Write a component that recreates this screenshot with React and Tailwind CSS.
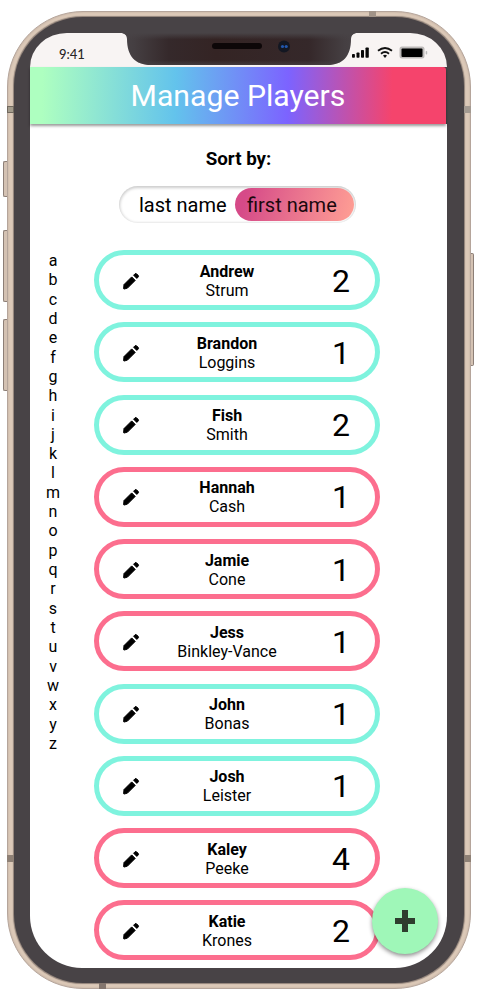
const letters = 'abcdefghijklmnopqrstuvwxyz'.split('');

const players = [
  { first: 'Andrew', last: 'Strum', count: 2, team: 'mint' },
  { first: 'Brandon', last: 'Loggins', count: 1, team: 'mint' },
  { first: 'Fish', last: 'Smith', count: 2, team: 'mint' },
  { first: 'Hannah', last: 'Cash', count: 1, team: 'pink' },
  { first: 'Jamie', last: 'Cone', count: 1, team: 'pink' },
  { first: 'Jess', last: 'Binkley-Vance', count: 1, team: 'pink' },
  { first: 'John', last: 'Bonas', count: 1, team: 'mint' },
  { first: 'Josh', last: 'Leister', count: 1, team: 'mint' },
  { first: 'Kaley', last: 'Peeke', count: 4, team: 'pink' },
  { first: 'Katie', last: 'Krones', count: 2, team: 'pink' },
];

const teamBorder = {
  mint: 'border-[#7ff3de]',
  pink: 'border-[#fc6e8e]',
};

function Pencil() {
  return (
    <svg className="shrink-0" width="18" height="18" viewBox="0 0 18 18" fill="#000" stroke="#000" strokeWidth="1" strokeLinejoin="round">
      <path d="M2 12.600 9.700 4.900 13.200 8.400 5.500 16.100 2.300 17 1.600 16.700Z" />
      <path d="M11.600 3.200 13.100 1.700Q14 1.200 14.700 1.900L16.100 3.300Q16.800 4.100 16.300 4.900L14.800 6.400Z" />
    </svg>
  );
}

function Notch() {
  return (
    <svg className="shrink-0" width="234" height="34" viewBox="0 0 234 34">
      <defs>
        <linearGradient id="notch" x1="0" x2="1" y1="0" y2="0">
          <stop offset="0" stopColor="#484346" />
          <stop offset=".05" stopColor="#453f42" />
          <stop offset=".2" stopColor="#35292b" />
          <stop offset=".4" stopColor="#342424" />
          <stop offset=".8" stopColor="#35282a" />
          <stop offset=".95" stopColor="#453f42" />
          <stop offset="1" stopColor="#484346" />
        </linearGradient>
        <linearGradient id="notchTop" x1="0" x2="0" y1="0" y2="1">
          <stop offset="0" stopColor="#484346" />
          <stop offset=".2" stopColor="#484346" stopOpacity="0" />
          <stop offset=".85" stopColor="#484346" stopOpacity="0" />
          <stop offset="1" stopColor="#484346" stopOpacity=".7" />
        </linearGradient>
      </defs>
      <path d="M0 0Q5 1 5 6C5 23 13 32 29 32H205C221 32 229 23 229 6Q229 1 234 0Z" fill="url(#notch)" />
      <path d="M0 0Q5 1 5 6C5 23 13 32 29 32H205C221 32 229 23 229 6Q229 1 234 0Z" fill="url(#notchTop)" />
      <rect x="90" y="10" width="50" height="6" rx="3" fill="#0d0708" />
      <circle cx="162" cy="13.500" r="6" fill="#131722" />
      <circle cx="160.500" cy="13.500" r="1.600" fill="#2257ad" />
      <circle cx="164.200" cy="13.500" r="1.600" fill="#2257ad" />
    </svg>
  );
}

function StatusIcons() {
  return (
    <svg className="mt-[12px] shrink-0" width="76" height="14" viewBox="0 0 76 14">
      <g fill="#080808">
        <rect x="0" y="9" width="2.900" height="3.800" rx=".8" />
        <rect x="4.500" y="7.400" width="3" height="5.400" rx=".8" />
        <rect x="9" y="5" width="3" height="7.800" rx=".8" />
        <rect x="13.500" y="2.400" width="3.300" height="10.400" rx=".8" />
      </g>
      <g fill="none" stroke="#111" strokeWidth="1.800">
        <path d="M26 5.800Q33 .2 40 5.800" />
        <path d="M29 8.700Q33 5.200 37 8.700" />
      </g>
      <path d="M31 10.500Q33 8.900 35 10.500L33 12.900Z" fill="#111" />
      <rect x="47.500" y="1.500" width="25" height="12" rx="2.500" fill="#bdbab9" />
      <rect x="49.500" y="3.500" width="21" height="8.500" rx="1" fill="#000" />
      <rect x="73.700" y="6" width="1.500" height="3.500" rx=".7" fill="#bbb" />
    </svg>
  );
}

function PlayerCard({ player }) {
  return (
    <div className={`flex h-[60px] w-[286px] items-center rounded-full border-[5px] bg-white pl-[23px] pt-px ${teamBorder[player.team]}`}>
      <Pencil />
      <div className="w-[174px] shrink-0 text-center text-[16px] leading-[19px]">
        <div className="font-bold">{player.first}</div>
        <div className="whitespace-nowrap">{player.last}</div>
      </div>
      <div className="ml-[13px] w-[28px] text-center text-[32px] leading-none">{player.count}</div>
    </div>
  );
}

function SideButton({ className }) {
  return <div className={`w-full border-y border-[#8d7f77] bg-[#d4c2b3] ${className}`} />;
}

export default function App() {
  return (
    <div className="flex h-[995px] w-[480px] overflow-hidden bg-white pl-[3px] pt-[11px] font-['Roboto','Liberation_Sans',sans-serif] text-black">
      <div className="flex w-[4px] shrink-0 flex-col pt-[150px]">
        <SideButton className="h-[36px] rounded-l-[2px] border-l" />
        <SideButton className="mt-[33px] h-[72px] rounded-l-[2px] border-l" />
        <SideButton className="mt-[17px] h-[72px] rounded-l-[2px] border-l" />
      </div>

      {/* metal frame with its antenna bands */}
      <div className="relative h-[978px] w-[464px] shrink-0 rounded-[76px] border border-[#b5a59b] bg-[#dcc9b8] px-[6px] py-[5px] shadow-[inset_0_0_2px_0_#b7a699]">
        <div className="absolute left-[-1px] top-[94px] h-[7px] w-[7px] border border-[#71695f] bg-[#a39b8b]" />
        <div className="absolute right-[-1px] top-[94px] h-[7px] w-[7px] bg-[#a39a91]" />
        <div className="absolute left-[-1px] top-[843px] h-[7px] w-[7px] bg-[#8e8075]" />
        <div className="absolute right-[-1px] top-[843px] h-[7px] w-[7px] bg-[#8e8075]" />
        <div className="absolute left-[361px] top-[-1px] h-[6px] w-[7px] bg-[#a19388]" />
        <div className="absolute bottom-[-1px] left-[91px] h-[6px] w-[7px] bg-[#83756d]" />

        {/* bezel */}
        <div className="h-[966px] w-[450px] rounded-[69px] bg-[#484346] px-[16px] pt-[16px] shadow-[0_0_1px_0.5px_#8f8178]">
          {/* screen */}
          <div className="relative flex h-[935px] w-[417px] flex-col">
            <div className="flex h-[34px] shrink-0 rounded-t-[52px_48px] bg-[#f8f4f3] pl-[29px]">
              <span className="w-[63px] pt-[12px] font-['Lato'] text-[13px] font-medium leading-[18px] text-[#292627]">9:41</span>
              <Notch />
              <div className="-ml-[4px] shrink-0">
                <StatusIcons />
              </div>
            </div>
            <h1 className="z-10 h-[57px] w-[416px] shrink-0 rounded-tr-[3px] bg-[linear-gradient(91deg,#aeffc0_3%,#63c3ec_35%,#7c63ff_62%,#f5446c_87%)] text-center text-[30.200px] leading-[57px] text-white shadow-[0_2px_3px_rgba(0,0,0,0.4)]">
              Manage Players
            </h1>
            <main className="flex min-h-0 flex-1 flex-col overflow-hidden rounded-b-[52px] bg-white">
              <div className="pt-[24px] text-center text-[18.800px] font-bold leading-[22px]">Sort by:</div>
              <div className="ml-[89px] mt-[16px] flex h-[37px] w-[237px] shrink-0 items-center rounded-full bg-white p-[2px] text-[20px] shadow-[inset_0_1px_3px_1px_rgba(0,0,0,0.2)]">
                <span className="w-[114px] whitespace-nowrap pl-[18px] leading-[34px]">last name</span>
                <span className="h-[33px] w-[119px] whitespace-nowrap rounded-full bg-linear-105 from-[#d64a88] from-10% to-[#ff9f94] pl-[12px] leading-[34px] text-[#1b080d]">first name</span>
              </div>
              <div className="mt-[27px] flex gap-[18px]">
                <div className="flex w-[46px] flex-col pt-px text-center text-[16px] leading-[19.32px]">
                  {letters.map((l) => (
                    <span key={l}>{l}</span>
                  ))}
                </div>
                <div className="flex flex-col gap-[12.25px]">
                  {players.map((p) => (
                    <PlayerCard key={p.first} player={p} />
                  ))}
                </div>
              </div>
            </main>
            <button className="absolute bottom-[14px] right-[9px] flex size-[66px] items-center justify-center rounded-full bg-[#9ff7b8] shadow-[0_2px_4px_rgba(0,0,0,0.45)]">
              <svg width="20" height="22" viewBox="0 0 20 22" fill="#2e3d2e">
                <path d="M7 0h6v8h7v6h-7v8H7v-8H0V8h7z" />
              </svg>
            </button>
          </div>
        </div>
      </div>

      <div className="flex w-[3px] shrink-0 flex-col pt-[242px]">
        <SideButton className="h-[113px] rounded-r-[2px] border-r" />
      </div>
    </div>
  );
}
